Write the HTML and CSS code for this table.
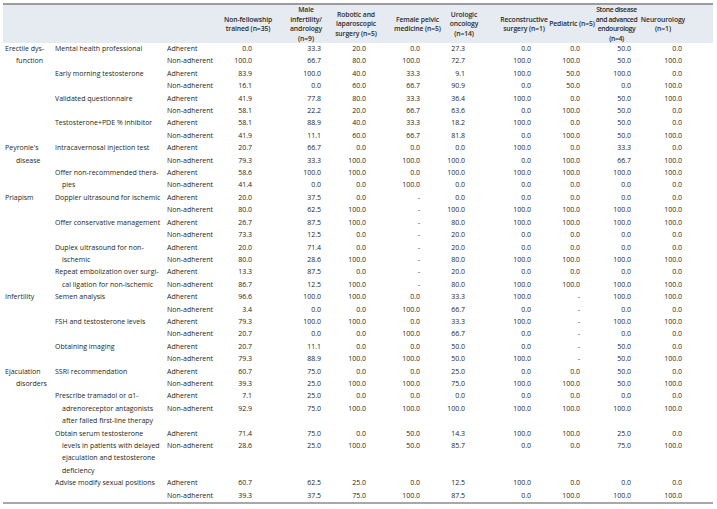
FILE: index.html
```html
<!DOCTYPE html>
<html lang="en">
<head>
<meta charset="utf-8">
<title>Guideline adherence by fellowship</title>
<link rel="stylesheet" href="styles.css">
</head>
<body>
<table class="tbl">
<colgroup>
<col class="w-cat"><col class="w-item"><col class="w-lab">
<col class="w-v1"><col class="w-v2"><col class="w-v3"><col class="w-v4"><col class="w-v5"><col class="w-v6"><col class="w-v7"><col class="w-v8"><col class="w-v9">
</colgroup>
<thead>
<tr>
<th></th><th></th><th></th>
<th>Non-fellowship<br>trained (n=35)</th>
<th>Male<br>infertility/<br>andrology<br>(n=9)</th>
<th>Robotic and<br>laparoscopic<br>surgery (n=5)</th>
<th>Female pelvic<br>medicine (n=5)</th>
<th>Urologic<br>oncology<br>(n=14)</th>
<th>Reconstructive<br>surgery (n=1)</th>
<th>Pediatric (n=5)</th>
<th>Stone disease<br>and advanced<br>endourology<br>(n=4)</th>
<th>Neurourology<br>(n=1)</th>
</tr>
</thead>
<tbody>
<tr><td class="cat" rowspan="8">Erectile dys-<br>function</td><td class="item" rowspan="2">Mental health professional</td><td>Adherent</td><td>0.0</td><td>33.3</td><td>20.0</td><td>0.0</td><td>27.3</td><td>0.0</td><td>0.0</td><td>50.0</td><td>0.0</td></tr>
<tr><td>Non-adherent</td><td>100.0</td><td>66.7</td><td>80.0</td><td>100.0</td><td>72.7</td><td>100.0</td><td>100.0</td><td>50.0</td><td>100.0</td></tr>
<tr><td class="item" rowspan="2">Early morning testosterone</td><td>Adherent</td><td>83.9</td><td>100.0</td><td>40.0</td><td>33.3</td><td>9.1</td><td>100.0</td><td>50.0</td><td>100.0</td><td>0.0</td></tr>
<tr><td>Non-adherent</td><td>16.1</td><td>0.0</td><td>60.0</td><td>66.7</td><td>90.9</td><td>0.0</td><td>50.0</td><td>0.0</td><td>100.0</td></tr>
<tr><td class="item" rowspan="2">Validated questionnaire</td><td>Adherent</td><td>41.9</td><td>77.8</td><td>80.0</td><td>33.3</td><td>36.4</td><td>100.0</td><td>0.0</td><td>50.0</td><td>100.0</td></tr>
<tr><td>Non-adherent</td><td>58.1</td><td>22.2</td><td>20.0</td><td>66.7</td><td>63.6</td><td>0.0</td><td>100.0</td><td>50.0</td><td>0.0</td></tr>
<tr><td class="item" rowspan="2">Testosterone+PDE % inhibitor</td><td>Adherent</td><td>58.1</td><td>88.9</td><td>40.0</td><td>33.3</td><td>18.2</td><td>100.0</td><td>0.0</td><td>50.0</td><td>0.0</td></tr>
<tr><td>Non-adherent</td><td>41.9</td><td>11.1</td><td>60.0</td><td>66.7</td><td>81.8</td><td>0.0</td><td>100.0</td><td>50.0</td><td>100.0</td></tr>

<tr><td class="cat" rowspan="4">Peyronie's<br>disease</td><td class="item" rowspan="2">Intracavernosal injection test</td><td>Adherent</td><td>20.7</td><td>66.7</td><td>0.0</td><td>0.0</td><td>0.0</td><td>100.0</td><td>0.0</td><td>33.3</td><td>0.0</td></tr>
<tr><td>Non-adherent</td><td>79.3</td><td>33.3</td><td>100.0</td><td>100.0</td><td>100.0</td><td>0.0</td><td>100.0</td><td>66.7</td><td>100.0</td></tr>
<tr><td class="item" rowspan="2">Offer non-recommended thera-<br>pies</td><td>Adherent</td><td>58.6</td><td>100.0</td><td>100.0</td><td>0.0</td><td>100.0</td><td>100.0</td><td>100.0</td><td>100.0</td><td>100.0</td></tr>
<tr><td>Non-adherent</td><td>41.4</td><td>0.0</td><td>0.0</td><td>100.0</td><td>0.0</td><td>0.0</td><td>0.0</td><td>0.0</td><td>0.0</td></tr>

<tr><td class="cat" rowspan="8">Priapism</td><td class="item" rowspan="2">Doppler ultrasound for ischemic</td><td>Adherent</td><td>20.0</td><td>37.5</td><td>0.0</td><td>-</td><td>0.0</td><td>0.0</td><td>0.0</td><td>0.0</td><td>0.0</td></tr>
<tr><td>Non-adherent</td><td>80.0</td><td>62.5</td><td>100.0</td><td>-</td><td>100.0</td><td>100.0</td><td>100.0</td><td>100.0</td><td>100.0</td></tr>
<tr><td class="item" rowspan="2">Offer conservative management</td><td>Adherent</td><td>26.7</td><td>87.5</td><td>100.0</td><td>-</td><td>80.0</td><td>100.0</td><td>100.0</td><td>100.0</td><td>100.0</td></tr>
<tr><td>Non-adherent</td><td>73.3</td><td>12.5</td><td>0.0</td><td>-</td><td>20.0</td><td>0.0</td><td>0.0</td><td>0.0</td><td>0.0</td></tr>
<tr><td class="item" rowspan="2">Duplex ultrasound for non-<br>ischemic</td><td>Adherent</td><td>20.0</td><td>71.4</td><td>0.0</td><td>-</td><td>20.0</td><td>0.0</td><td>0.0</td><td>0.0</td><td>0.0</td></tr>
<tr><td>Non-adherent</td><td>80.0</td><td>28.6</td><td>100.0</td><td>-</td><td>80.0</td><td>100.0</td><td>100.0</td><td>100.0</td><td>100.0</td></tr>
<tr><td class="item" rowspan="2">Repeat embolization over surgi-<br>cal ligation for non-ischemic</td><td>Adherent</td><td>13.3</td><td>87.5</td><td>0.0</td><td>-</td><td>20.0</td><td>0.0</td><td>0.0</td><td>0.0</td><td>0.0</td></tr>
<tr><td>Non-adherent</td><td>86.7</td><td>12.5</td><td>100.0</td><td>-</td><td>80.0</td><td>100.0</td><td>100.0</td><td>100.0</td><td>100.0</td></tr>

<tr><td class="cat" rowspan="6">Infertility</td><td class="item" rowspan="2">Semen analysis</td><td>Adherent</td><td>96.6</td><td>100.0</td><td>100.0</td><td>0.0</td><td>33.3</td><td>100.0</td><td>-</td><td>100.0</td><td>100.0</td></tr>
<tr><td>Non-adherent</td><td>3.4</td><td>0.0</td><td>0.0</td><td>100.0</td><td>66.7</td><td>0.0</td><td>-</td><td>0.0</td><td>0.0</td></tr>
<tr><td class="item" rowspan="2">FSH and testosterone levels</td><td>Adherent</td><td>79.3</td><td>100.0</td><td>100.0</td><td>0.0</td><td>33.3</td><td>100.0</td><td>-</td><td>100.0</td><td>100.0</td></tr>
<tr><td>Non-adherent</td><td>20.7</td><td>0.0</td><td>0.0</td><td>100.0</td><td>66.7</td><td>0.0</td><td>-</td><td>0.0</td><td>0.0</td></tr>
<tr><td class="item" rowspan="2">Obtaining imaging</td><td>Adherent</td><td>20.7</td><td>11.1</td><td>0.0</td><td>0.0</td><td>50.0</td><td>0.0</td><td>-</td><td>50.0</td><td>0.0</td></tr>
<tr><td>Non-adherent</td><td>79.3</td><td>88.9</td><td>100.0</td><td>100.0</td><td>50.0</td><td>100.0</td><td>-</td><td>50.0</td><td>100.0</td></tr>

<tr><td class="cat" rowspan="11">Ejaculation<br>disorders</td><td class="item" rowspan="2">SSRI recommendation</td><td>Adherent</td><td>60.7</td><td>75.0</td><td>0.0</td><td>0.0</td><td>25.0</td><td>0.0</td><td>0.0</td><td>50.0</td><td>0.0</td></tr>
<tr><td>Non-adherent</td><td>39.3</td><td>25.0</td><td>100.0</td><td>100.0</td><td>75.0</td><td>100.0</td><td>100.0</td><td>50.0</td><td>100.0</td></tr>
<tr><td class="item" rowspan="3">Prescribe tramadol or α1-<br>adrenoreceptor antagonists<br>after failed first-line therapy</td><td>Adherent</td><td>7.1</td><td>25.0</td><td>0.0</td><td>0.0</td><td>0.0</td><td>0.0</td><td>0.0</td><td>0.0</td><td>0.0</td></tr>
<tr><td>Non-adherent</td><td>92.9</td><td>75.0</td><td>100.0</td><td>100.0</td><td>100.0</td><td>100.0</td><td>100.0</td><td>100.0</td><td>100.0</td></tr>
<tr class="filler"><td colspan="10"></td></tr>
<tr><td class="item" rowspan="4">Obtain serum testosterone<br>levels in patients with delayed<br>ejaculation and testosterone<br>deficiency</td><td>Adherent</td><td>71.4</td><td>75.0</td><td>0.0</td><td>50.0</td><td>14.3</td><td>100.0</td><td>100.0</td><td>25.0</td><td>0.0</td></tr>
<tr><td>Non-adherent</td><td>28.6</td><td>25.0</td><td>100.0</td><td>50.0</td><td>85.7</td><td>0.0</td><td>0.0</td><td>75.0</td><td>100.0</td></tr>
<tr class="filler"><td colspan="10"></td></tr>
<tr class="filler"><td colspan="10"></td></tr>
<tr><td class="item" rowspan="2">Advise modify sexual positions</td><td>Adherent</td><td>60.7</td><td>62.5</td><td>25.0</td><td>0.0</td><td>12.5</td><td>100.0</td><td>0.0</td><td>0.0</td><td>0.0</td></tr>
<tr><td>Non-adherent</td><td>39.3</td><td>37.5</td><td>75.0</td><td>100.0</td><td>87.5</td><td>0.0</td><td>100.0</td><td>100.0</td><td>100.0</td></tr>
</tbody>
</table>
</body>
</html>
```
FILE: styles.css
```css
body {
  margin: 0;
  background: #ffffff;
}

.tbl {
  margin: 3px 0 0 3px;
  width: 710px;
  border-collapse: collapse;
  table-layout: fixed;
  font-family: "Open Sans", "Liberation Sans", sans-serif;
  font-size: 7px;
  color: #231f20;
  border-bottom: 2px solid #a8a8a8;
}

.w-cat { width: 49px; }
.w-item { width: 112px; }
.w-lab { width: 50px; }
.w-v1 { width: 68px; }
.w-v2 { width: 48px; }
.w-v3 { width: 59px; }
.w-v4 { width: 57px; }
.w-v5 { width: 41px; }
.w-v6 { width: 62px; }
.w-v7 { width: 46px; }
.w-v8 { width: 45px; }
.w-v9 { width: 73px; }

.tbl thead th {
  background: #e6ebf1;
  border-top: 2px solid #9c9c9c;
  font-size: 6.8px;
  letter-spacing: -0.1px;
  font-weight: 600;
  line-height: 9.5px;
  height: 38px;
  padding: 0;
  text-align: center;
  vertical-align: middle;
  white-space: nowrap;
  color: #2a2a2a;
}

.tbl thead th:nth-last-child(7) { padding-right: 7px; }
.tbl thead th:nth-last-child(5) { padding-right: 5px; }
.tbl thead th:nth-last-child(4) { padding-left: 12px; }
.tbl thead th:nth-last-child(2) { letter-spacing: -0.35px; padding-right: 2px; }
.tbl thead th:nth-last-child(1) { padding-right: 27px; }

.tbl tbody td {
  height: 12.4px;
  line-height: 12.4px;
  padding: 0;
  vertical-align: top;
  white-space: nowrap;
  text-align: right;
}

.tbl tbody td.cat {
  text-align: left;
  padding-left: 13px;
  text-indent: -11px;
}

.tbl tbody td.item {
  text-align: left;
  padding-left: 10px;
  text-indent: -7px;
}

.tbl tbody td:nth-last-child(10) {
  text-align: left;
  padding-left: 3px;
}

.tbl tbody td:nth-last-child(9) { padding-right: 30px; }
.tbl tbody td:nth-last-child(8) { padding-right: 9px; }
.tbl tbody td:nth-last-child(7) { padding-right: 23px; }
.tbl tbody td:nth-last-child(6) { padding-right: 26px; }
.tbl tbody td:nth-last-child(5) { padding-right: 22px; }
.tbl tbody td:nth-last-child(4) { padding-right: 18px; }
.tbl tbody td:nth-last-child(3) { padding-right: 15px; }
.tbl tbody td:nth-last-child(2) { padding-right: 9px; }
.tbl tbody td:nth-last-child(1) { padding-right: 31px; }
```
